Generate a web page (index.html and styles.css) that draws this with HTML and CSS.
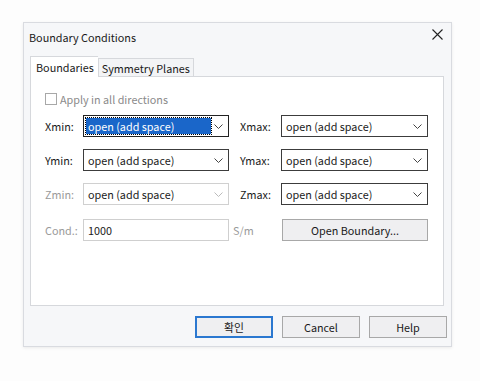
FILE: index.html
```html
<!DOCTYPE html>
<html>
<head>
<meta charset="utf-8">
<link rel="stylesheet" href="styles.css">
</head>
<body>
<div class="page">
  <div class="dialog">
    <div class="titlebar">
      <span class="title">Boundary Conditions</span>
      <svg class="close" width="11" height="11" viewBox="0 0 11 11"><path d="M0.5 0.5 L10.5 10.5 M10.5 0.5 L0.5 10.5" stroke="#222" stroke-width="1.1" fill="none"/></svg>
    </div>
    <div class="tabs">
      <div class="tab active">Boundaries</div>
      <div class="tab">Symmetry Planes</div>
    </div>
    <div class="panel">
      <label class="check"><span class="box"></span><span>Apply in all directions</span></label>
      <div class="grid">
        <span class="lbl">Xmin:</span>
        <div class="select focus"><span class="val sel">open (add space)</span><svg class="chev" width="9" height="5" viewBox="0 0 9 5"><path d="M0.5 0.5 L4.5 4.5 L8.5 0.5" stroke="#444" fill="none"/></svg></div>
        <span class="lbl r">Xmax:</span>
        <div class="select"><span class="val">open (add space)</span><svg class="chev" width="9" height="5" viewBox="0 0 9 5"><path d="M0.5 0.5 L4.5 4.5 L8.5 0.5" stroke="#444" fill="none"/></svg></div>

        <span class="lbl">Ymin:</span>
        <div class="select"><span class="val">open (add space)</span><svg class="chev" width="9" height="5" viewBox="0 0 9 5"><path d="M0.5 0.5 L4.5 4.5 L8.5 0.5" stroke="#444" fill="none"/></svg></div>
        <span class="lbl r">Ymax:</span>
        <div class="select"><span class="val">open (add space)</span><svg class="chev" width="9" height="5" viewBox="0 0 9 5"><path d="M0.5 0.5 L4.5 4.5 L8.5 0.5" stroke="#444" fill="none"/></svg></div>

        <span class="lbl dis">Zmin:</span>
        <div class="select disabled"><span class="val">open (add space)</span><svg class="chev" width="9" height="5" viewBox="0 0 9 5"><path d="M0.5 0.5 L4.5 4.5 L8.5 0.5" stroke="#bbb" fill="none"/></svg></div>
        <span class="lbl r">Zmax:</span>
        <div class="select"><span class="val">open (add space)</span><svg class="chev" width="9" height="5" viewBox="0 0 9 5"><path d="M0.5 0.5 L4.5 4.5 L8.5 0.5" stroke="#444" fill="none"/></svg></div>

        <span class="lbl dis last">Cond.:</span>
        <div class="input last">1000</div>
        <span class="lbl unit last">S/m</span>
        <div class="btn wide last">Open Boundary...</div>
      </div>
    </div>
    <div class="buttons">
      <div class="btn default">확인</div>
      <div class="btn">Cancel</div>
      <div class="btn">Help</div>
    </div>
  </div>
</div>
</body>
</html>
```
FILE: styles.css
```css
html, body {
  margin: 0;
  padding: 0;
  background: #fdfdfd;
}
body {
  font-family: "Noto Sans CJK KR", "Noto Sans", sans-serif;
  font-size: 10.8px;
  color: #1a1a1a;
  width: 480px;
  height: 381px;
  overflow: hidden;
}
.page {
  padding: 22px 0 0 23px;
}
.dialog {
  width: 427px;
  height: 323px;
  background: #f6f7f9;
  border: 1px solid #d9dbe0;
  box-shadow: 0 1px 3px rgba(0,0,0,0.08);
  display: flex;
  flex-direction: column;
}
.titlebar {
  height: 33px;
  display: flex;
  align-items: flex-start;
  justify-content: space-between;
  padding: 5px 8px 0 5px;
  box-sizing: border-box;
}
.title {
  font-size: 10.8px;
  line-height: 16px;
  padding-top: 1px;
}
.close {
  margin-top: 1px;
}
.tabs {
  display: flex;
  align-items: flex-end;
  margin-left: 6px;
  height: 20px;
}
.tab {
  height: 18px;
  line-height: 18px;
  padding: 0 3px;
  border: 1px solid #d6d8dc;
  border-bottom: none;
  background: #f3f4f6;
  box-sizing: border-box;
}
.tab.active {
  height: 21px;
  line-height: 20px;
  padding: 0 4px 0 5px;
  background: #fff;
  border-right: none;
  position: relative;
  top: 1px;
}
.panel {
  margin-left: 6px;
  width: 414px;
  height: 230px;
  background: #fff;
  border: 1px solid #d6d8dc;
  box-sizing: border-box;
  padding: 16px 0 0 14px;
}
.check {
  display: flex;
  align-items: center;
  gap: 3px;
  color: #8a8a8a;
  height: 12px;
  line-height: 14px;
}
.box {
  width: 10px;
  height: 10px;
  border: 1px solid #a8a8a8;
  background: #fff;
}
.grid {
  margin-top: 10px;
  display: grid;
  grid-template-columns: 38px 146px 52px 147px;
  grid-auto-rows: 22px;
  row-gap: 12px;
  align-items: center;
  line-height: 16px;
}
.lbl {
  color: #1a1a1a;
}
.lbl.r {
  padding-left: 11px;
}
.lbl.dis {
  color: #9a9a9a;
}
.lbl.unit {
  padding-left: 4px;
  color: #9a9a9a;
}
.last {
  margin-top: 4px;
}
.select {
  height: 22px;
  border: 1px solid #3c3c3c;
  box-sizing: border-box;
  display: flex;
  align-items: center;
  justify-content: space-between;
  padding: 0 5px 0 2px;
  background: #fff;
}
.select.disabled {
  border-color: #d0d0d0;
}
.select.focus {
  border-color: #222;
}
.val {
  padding: 0 2px;
  line-height: 16px;
}
.val.sel {
  background: #1a66c9;
  color: #fff;
  width: 121px;
  outline: 1px dotted #000;
}
.input {
  height: 22px;
  border: 1px solid #cfcfcf;
  box-sizing: border-box;
  padding: 0 4px;
  line-height: 20px;
}
.btn {
  height: 22px;
  border: 1px solid #a8a8a8;
  background: #efeff1;
  box-sizing: border-box;
  display: flex;
  align-items: center;
  justify-content: center;
  line-height: 16px;
}
.btn.wide {
  width: 146px;
  margin-left: 1px;
}
.buttons {
  display: flex;
  justify-content: flex-end;
  gap: 9px;
  margin-top: 10px;
  padding-right: 4px;
}
.buttons .btn {
  width: 78px;
}
.btn.default {
  border: 2px solid #2b78d0;
}
```
